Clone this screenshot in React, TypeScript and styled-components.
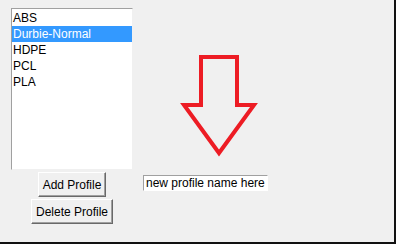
import React, { useState } from 'react';
import styled, { createGlobalStyle } from 'styled-components';

const GlobalStyle = createGlobalStyle`
    html, body {
        margin: 0;
        padding: 0;
        background: #f0f0f0;
    }
    * {
        box-sizing: border-box;
    }
`;

const profiles = ['ABS', 'Durbie-Normal', 'HDPE', 'PCL', 'PLA'];

const App = () => {
    const [selected, setSelected] = useState(1);
    const [name, setName] = useState('new profile name here');
    return (
        <>
            <GlobalStyle />
            <Window>
                <ListBox>
                    {profiles.map((p, i) => (
                        <Item
                            key={p}
                            $active={i === selected}
                            onClick={() => setSelected(i)}
                        >
                            {p}
                        </Item>
                    ))}
                </ListBox>
                <ArrowCell>
                    <svg width="84" height="112" viewBox="0 0 84 112">
                        <polygon
                            points="23,7 59,7 59,55 76,55 41,103 6,55 23,55"
                            fill="none"
                            stroke="#ed1c24"
                            strokeWidth="4"
                            strokeLinejoin="miter"
                        />
                    </svg>
                </ArrowCell>
                <ButtonCell>
                    <Button>Add Profile</Button>
                </ButtonCell>
                <EntryCell>
                    <Entry
                        value={name}
                        onChange={(e) => setName(e.target.value)}
                    />
                </EntryCell>
                <ButtonCell>
                    <Button>Delete Profile</Button>
                </ButtonCell>
            </Window>
        </>
    );
};

export default App;

const Window = styled.div`
    width: 396px;
    height: 244px;
    background: #f0f0f0;
    border-right: 2px solid #111;
    border-bottom: 2px solid #111;
    padding: 8px 0 0 11px;
    display: grid;
    grid-template-columns: 122px auto;
    grid-template-rows: 162px auto auto;
    align-content: start;
    column-gap: 10px;
    row-gap: 1px;
    font-family: 'Liberation Sans', Arial, sans-serif;
    font-size: 12px;
    color: #000;
`;

const ListBox = styled.div`
    background: #fff;
    border-top: 1px solid #a0a0a0;
    border-left: 1px solid #a0a0a0;
    border-right: 1px solid #f0f0f0;
    border-bottom: 1px solid #f0f0f0;
    padding-top: 1px;
    display: flex;
    flex-direction: column;
`;

const Item = styled.div<{ $active: boolean }>`
    height: 16px;
    line-height: 16px;
    padding-left: 1px;
    background: ${(p) => (p.$active ? '#3399ff' : 'transparent')};
    color: ${(p) => (p.$active ? '#fff' : '#000')};
    white-space: nowrap;
    cursor: default;
`;

const ArrowCell = styled.div`
    padding: 42px 0 0 35px;
`;

const ButtonCell = styled.div`
    display: flex;
    justify-content: center;
    padding-top: 1px;
`;

const Button = styled.button`
    height: 25px;
    padding: 0 4px;
    font-family: inherit;
    font-size: 12px;
    color: #000;
    background: #f0f0f0;
    border: 1px solid;
    border-color: #fff #696969 #696969 #fff;
    box-shadow: inset -1px -1px 0 #a0a0a0;
    border-radius: 0;
`;

const EntryCell = styled.div`
    padding-top: 4px;
`;

const Entry = styled.input`
    width: 125px;
    height: 16px;
    padding: 0 0 0 2px;
    font-family: inherit;
    font-size: 12px;
    color: #000;
    background: #fff;
    border: 1px solid;
    border-color: #a0a0a0 #fff #fff #a0a0a0;
    outline: none;
`;
